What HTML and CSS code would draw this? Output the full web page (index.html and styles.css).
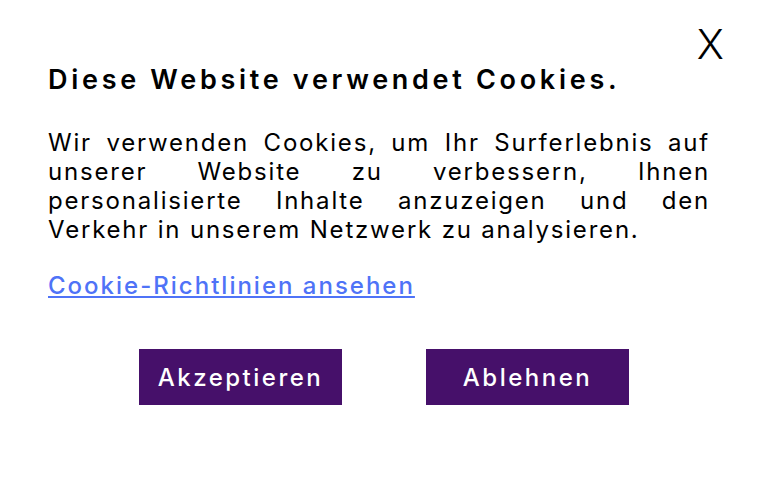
FILE: index.html
```html
<!DOCTYPE html>
<html lang="de">

<head>
    <meta charset="UTF-8">
    <meta name="viewport" content="width=device-width, initial-scale=1.0">
    <title>Cookies</title>
    <link rel="stylesheet" href="styles.css">
</head>

<body>
    <div class="cookie-box">
        <button class="close" aria-label="Schließen">X</button>
        <h1>Diese Website verwendet Cookies.</h1>
        <p class="text">
            <span class="line">Wir verwenden Cookies, um Ihr Surferlebnis auf</span>
            <span class="line">unserer Website zu verbessern, Ihnen</span>
            <span class="line">personalisierte Inhalte anzuzeigen und den</span>
            <span class="line last">Verkehr in unserem Netzwerk zu analysieren.</span>
        </p>
        <a class="policy" href="#">Cookie-Richtlinien ansehen</a>
        <div class="actions">
            <button class="btn">Akzeptieren</button>
            <button class="btn">Ablehnen</button>
        </div>
    </div>
</body>

</html>
```

FILE: styles.css
```css
body {
    margin: 0;
    padding: 0;
    background: #fff;
    color: #000;
    font-family: Inter, "Noto Sans", sans-serif;
}

.cookie-box {
    position: relative;
    width: 768px;
    height: 480px;
    padding: 60px 58px 0 48px;
    box-sizing: border-box;
}

.close {
    position: absolute;
    top: 22px;
    right: 44px;
    background: none;
    border: none;
    padding: 0;
    font-family: Inter, sans-serif;
    font-weight: 300;
    font-size: 41px;
    line-height: 44px;
    color: #000;
    cursor: pointer;
}

h1 {
    margin: 0;
    font-size: 27px;
    font-weight: 600;
    line-height: 40px;
    letter-spacing: 3.7px;
}

.text {
    margin: 28px 0 0;
    font-size: 24px;
    line-height: 29px;
    letter-spacing: 1.8px;
}

.line {
    display: block;
    text-align: justify;
    text-align-last: justify;
}

.line.last {
    text-align-last: left;
}

.policy {
    display: inline-block;
    margin-top: 26px;
    color: #4f73f7;
    font-size: 24px;
    font-weight: 500;
    line-height: 32px;
    letter-spacing: 2px;
}

.actions {
    display: flex;
    justify-content: center;
    gap: 84px;
    margin: 47px 0 0 -48px;
    width: 768px;
}

.btn {
    width: 203px;
    height: 56px;
    background: #46106a;
    color: #fff;
    border: none;
    font-family: Inter, sans-serif;
    font-size: 24px;
    font-weight: 500;
    letter-spacing: 2.5px;
    cursor: pointer;
}
```
